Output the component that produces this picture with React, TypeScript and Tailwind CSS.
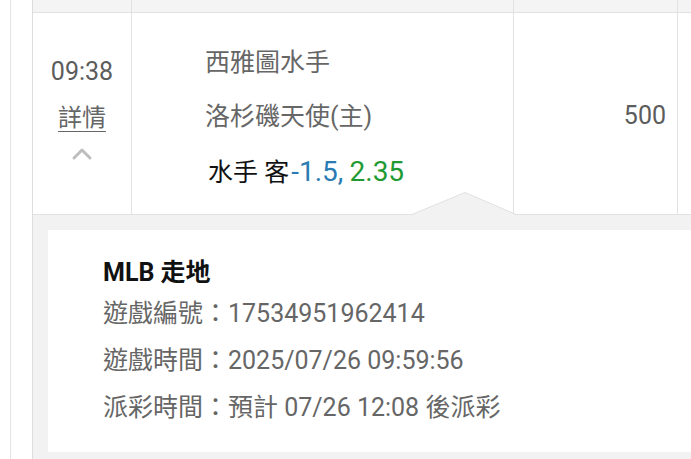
import { ChevronUp } from "lucide-react";

const font = "font-['Roboto','Noto_Sans_CJK_TC',sans-serif]";

export default function App() {
  return (
    <div className={`relative flex h-[459px] w-[691px] overflow-hidden bg-white text-[25px] ${font}`}>
      <div className="w-[10px] shrink-0" />
      <div className="w-px shrink-0 bg-[#e4e4e4]" />
      <div className="w-[21px] shrink-0" />

      <div className="flex min-w-0 flex-1 flex-col border-l border-[#dddddd]">
        {/* header strip */}
        <div className="flex h-[13px] shrink-0 border-b border-[#e2e2e2] bg-[#f4f4f4]">
          <div className="w-[99px] shrink-0 border-r border-[#e2e2e2]" />
          <div className="w-[382px] shrink-0 border-r border-[#e2e2e2]" />
          <div className="w-[164px] shrink-0 border-r border-[#e2e2e2]" />
          <div className="flex-1" />
        </div>

        {/* bet row */}
        <div className="flex h-[202px] shrink-0 border-b border-[#e2e2e2]">
          <div className="flex w-[99px] shrink-0 flex-col items-center border-r border-[#e2e2e2] pt-[41px] text-[#5c5c5c]">
            <span className="leading-[36px]">09:38</span>
            <span className="mt-[13px] text-[24px] leading-[30px] text-[#666] underline decoration-1 underline-offset-[5px]">
              詳情
            </span>
            <ChevronUp className="mt-[5px] h-[32px] w-[32px] text-[#bdbdbd]" strokeWidth={2.2} />
          </div>

          <div className="flex w-[382px] shrink-0 flex-col border-r border-[#e2e2e2] pl-[73px] pt-[23px]">
            <div className="leading-[54px] text-[#666]">西雅圖水手</div>
            <div className="leading-[54px] text-[#666]">洛杉磯天使(主)</div>
            <div className="ml-[3px] mt-[1px] leading-[54px] text-[#111]">
              水手 客<span className="ml-[2px] text-[28px] text-[#2b7bb3]">-1.5,</span>{" "}
              <span className="text-[28px] text-[#1f9a33]">2.35</span>
            </div>
          </div>

          <div className="flex w-[164px] shrink-0 items-center justify-end border-r border-[#e2e2e2] pr-[11px] pt-[4px] text-[#5c5c5c]">
            500
          </div>
          <div className="flex-1" />
        </div>

        {/* detail panel */}
        <div className="flex-1 bg-[#f2f2f2] pl-[15px] pt-[15px] pb-[7px]">
          <div className="h-full bg-white pl-[55px] pt-[25px]">
            <div className="text-[25px] font-bold leading-[36px] text-[#111]">MLB 走地</div>
            <div className="-mt-[1px] leading-[47px] text-[#666]">遊戲編號：17534951962414</div>
            <div className="leading-[47px] text-[#666]">遊戲時間：2025/07/26 09:59:56</div>
            <div className="leading-[47px] text-[#666]">派彩時間：預計 07/26 12:08 後派彩</div>
          </div>
        </div>
      </div>

      {/* pointer into the detail panel */}
      <svg className="absolute left-[412px] top-[192px]" width="104" height="24" viewBox="0 0 104 24">
        <polygon points="0,23 53,1 104,23" fill="#f2f2f2" />
        <polyline points="0,22.5 53,0.5 104,22.5" fill="none" stroke="#dedede" strokeWidth="1" />
      </svg>
    </div>
  );
}
